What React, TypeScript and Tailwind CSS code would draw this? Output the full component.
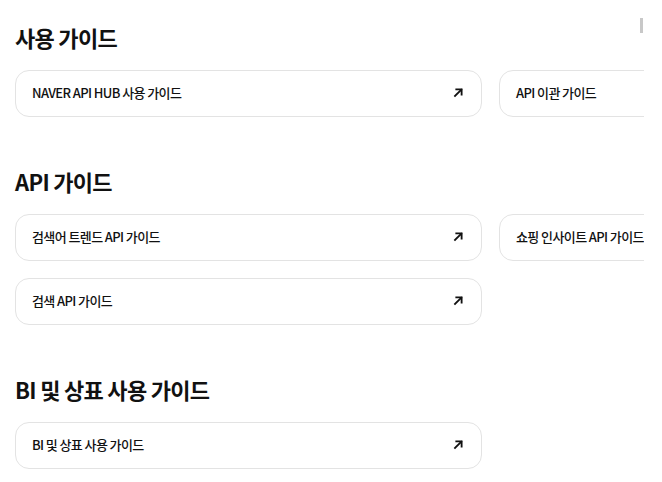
const sections = [
  { title: '사용 가이드', items: ['NAVER API HUB 사용 가이드', 'API 이관 가이드'] },
  { title: 'API 가이드', items: ['검색어 트렌드 API 가이드', '쇼핑 인사이트 API 가이드', '검색 API 가이드'] },
  { title: 'BI 및 상표 사용 가이드', items: ['BI 및 상표 사용 가이드'] },
];

const ArrowIcon = () => (
  <svg width="11" height="11" viewBox="0 0 12 12" fill="none">
    <path d="M2.2 9.8L9 3" stroke="#111" strokeWidth="2" strokeLinecap="square" />
    <path d="M3.6 2.6H9.4V8.4" stroke="#111" strokeWidth="2" strokeLinecap="square" />
  </svg>
);

const GuideCard = ({ label }: { label: string }) => (
  <a className="flex h-[47px] w-[467px] shrink-0 items-center justify-between rounded-[14px] border border-[#e3e3e3] bg-white pb-[2px] pl-[16px] pr-[17px] text-[13px] font-medium tracking-[-0.6px] text-[#111]">
    <span>{label}</span>
    <ArrowIcon />
  </a>
);

export default function App() {
  return (
    <div
      className="relative h-[482px] w-[662px] overflow-hidden bg-white"
      style={{ fontFamily: '"Noto Sans CJK KR", "Noto Sans", sans-serif' }}
    >
      <div className="absolute right-[19px] top-[18px] h-[15px] w-[3px] bg-[#c8c8c8]" />
      <div className="w-[644px] overflow-hidden pl-[15px] pt-[23px]">
        {sections.map((s) => (
          <section key={s.title} className="mb-[50px]">
            <h2 className="mb-[19px] h-[28px] text-[22px] font-bold leading-[28px] tracking-[-0.7px] text-[#111]">
              {s.title}
            </h2>
            <div className="grid w-[951px] grid-cols-[467px_467px] gap-[17px]">
              {s.items.map((i) => (
                <GuideCard key={i} label={i} />
              ))}
            </div>
          </section>
        ))}
      </div>
    </div>
  );
}
